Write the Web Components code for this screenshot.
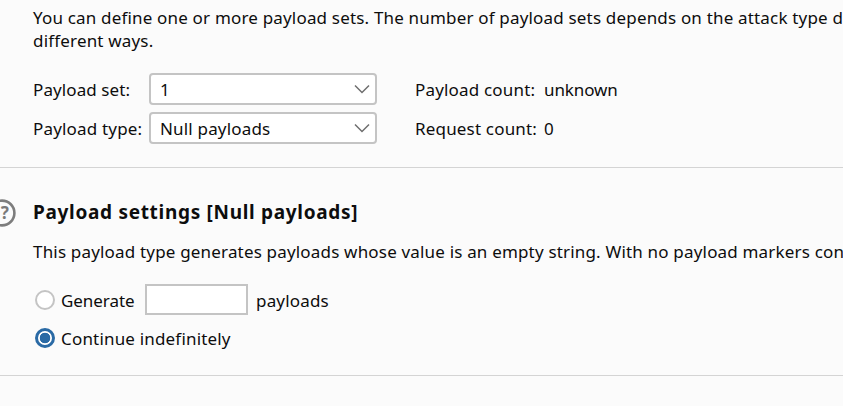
<!DOCTYPE html>
<html><head><meta charset="utf-8">
<style>
html,body{margin:0;padding:0;height:100%;overflow:hidden;background:#fbfbfb}
body{font:17px/23px "Noto Sans",sans-serif;letter-spacing:.18px;color:#0d0d0d;width:843px;height:406px}
</style></head><body>
<template id="t-sec"><style>
:host{display:block;box-sizing:border-box;padding-left:33px;position:relative;border-bottom:1px solid #d4d4d4}
</style><slot></slot></template>

<template id="t-select"><style>
:host{display:flex;align-items:center;justify-content:space-between;box-sizing:border-box;width:228px;height:32px;background:#fff;border:2px solid #c4c4c4;border-radius:4px;padding:0 5px 0 9px}
svg{display:block}
</style><slot></slot><svg width="16" height="10" viewBox="0 0 16 10"><path d="M1 1.5 8 8.5 15 1.5" fill="none" stroke="#6e6e6e" stroke-width="1.5"/></svg></template>

<template id="t-field"><style>
:host{display:grid;grid-template-columns:116px 228px 38px 129px auto;align-items:center;height:32px}
</style><slot></slot></template>

<template id="t-radio"><style>
:host{display:flex;align-items:center;height:31px;gap:6px;padding-left:2px}
i{display:block;box-sizing:border-box;width:20px;height:20px;border-radius:50%;background:#fff;border:2px solid #c4c4c4;flex:none}
:host([checked]) i{border:3px solid #2a6aa5;background:radial-gradient(circle,#2a6aa5 0 5px,#fff 5.6px)}
</style><i></i><slot></slot></template>

<template id="t-help"><style>
:host{display:block;position:absolute;left:-12px;top:31px;width:28px;height:28px}
svg{display:block}
text{font:700 17px "Noto Sans",sans-serif;letter-spacing:0;fill:#7a7a7a}
</style><svg width="28" height="28" viewBox="0 0 28 28"><circle cx="14" cy="14" r="12.4" fill="#fbfbfb" stroke="#7d7d7d" stroke-width="2.6"/><text x="16.8" y="20" text-anchor="middle">?</text></svg></template>

<script>
function def(name,tid){customElements.define(name,class extends HTMLElement{constructor(){super();this.attachShadow({mode:'open'}).appendChild(document.getElementById(tid).content.cloneNode(true));}});}
def('ui-section','t-sec');def('ui-select','t-select');def('ui-field','t-field');def('ui-radio','t-radio');def('ui-help','t-help');
</script>

<ui-section style="height:168px;padding-top:6px;white-space:nowrap;overflow:hidden">
<div>You can define one or more payload sets. The number of payload sets depends on the attack type d</div>
<div>different ways.</div>
<ui-field style="margin-top:21px"><span style="letter-spacing:.1px">Payload set:</span><ui-select>1</ui-select><span></span><span>Payload count:</span><span style="letter-spacing:-.1px">unknown</span></ui-field>
<ui-field style="margin-top:7px"><span>Payload type:</span><ui-select>Null payloads</ui-select><span></span><span>Request count:</span><span>0</span></ui-field>
</ui-section>
<ui-section style="height:208px;padding-top:31px;white-space:nowrap;overflow:hidden">
<ui-help></ui-help>
<div style="font-weight:700;font-size:19px;letter-spacing:.69px;line-height:26px">Payload settings [Null payloads]</div>
<div style="margin-top:15px">This payload type generates payloads whose value is an empty string. With no payload markers con</div>
<ui-radio style="margin-top:21px"><span style="width:73px;padding-top:2px;letter-spacing:-.05px">Generate</span><span style="display:block;box-sizing:border-box;width:103px;height:31px;background:#fff;border:2px solid #c4c4c4;margin:0 2px 0 5px"></span><span style="padding-top:2px">payloads</span></ui-radio>
<ui-radio checked style="margin-top:7px"><span style="padding-top:2px">Continue indefinitely</span></ui-radio>
</ui-section>
</body></html>
